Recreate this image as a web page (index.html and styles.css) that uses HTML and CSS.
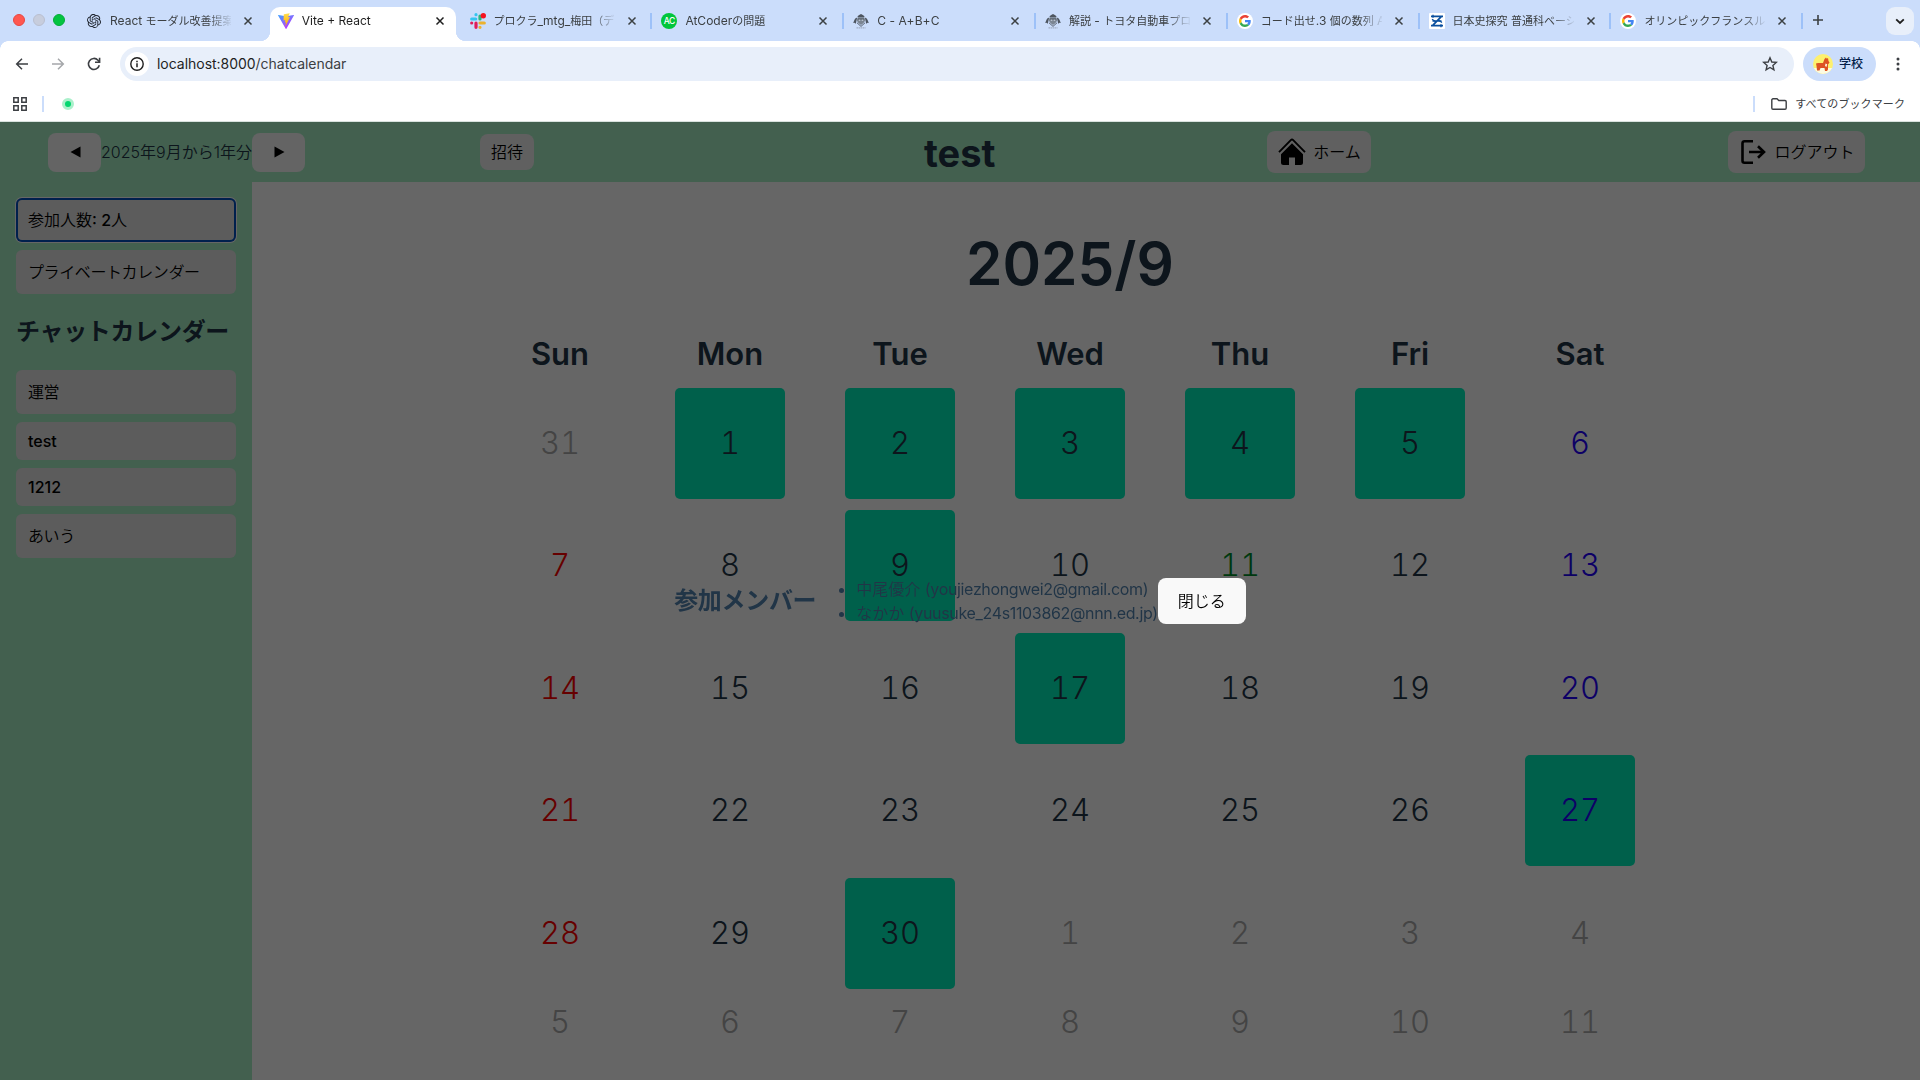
FILE: index.html
```
<!DOCTYPE html>
<html lang="ja">
<head>
<meta charset="utf-8">
<title>Vite + React</title>
<link rel="stylesheet" href="styles.css">
</head>
<body>
<svg class="defs" width="0" height="0" aria-hidden="true">
  <symbol id="close" viewBox="0 0 10 10"><path d="M1.5 1.5l7 7M8.5 1.5l-7 7" stroke="currentColor" stroke-width="1.5" fill="none"/></symbol>
  <symbol id="google" viewBox="0 0 64 64"><circle cx="32" cy="32" r="32" fill="#fff"/><g transform="translate(8 8)"><path fill="#EA4335" d="M24 9.5c3.54 0 6.71 1.22 9.21 3.6l6.85-6.85C35.9 2.38 30.47 0 24 0 14.62 0 6.51 5.38 2.56 13.22l7.98 6.19C12.43 13.72 17.74 9.5 24 9.5z"/><path fill="#4285F4" d="M46.98 24.55c0-1.57-.15-3.09-.38-4.55H24v9.02h12.94c-.58 2.96-2.26 5.48-4.78 7.18l7.73 6c4.51-4.18 7.09-10.36 7.09-17.65z"/><path fill="#FBBC05" d="M10.53 28.59c-.48-1.45-.76-2.99-.76-4.59s.27-3.14.76-4.59l-7.98-6.19C.92 16.46 0 20.12 0 24c0 3.88.92 7.54 2.56 10.78l7.97-6.19z"/><path fill="#34A853" d="M24 48c6.48 0 11.93-2.13 15.89-5.81l-7.73-6c-2.15 1.45-4.92 2.3-8.16 2.3-6.26 0-11.57-4.22-13.47-9.91l-7.98 6.19C6.51 42.62 14.62 48 24 48z"/></g></symbol>
  <symbol id="atcoder" viewBox="0 0 16 16"><path d="M4.500 3.200L6.200 2 8 1l1.800 1 1.700 1.200-.5 1.200H5z" fill="#4d5560"/><path d="M4.800 4.600h6.400l1.300 2.400-1.900 3L8 12 5.400 10 3.500 7z" fill="#7b8592"/><path d="M4.200 4.500C2.600 4.900 1.700 6 1.200 7.400L.2 10l1.200-.3 1.500 1 .6-3.500zM11.800 4.500c1.600.4 2.500 1.500 3 2.900l1 2.600-1.200-.3-1.500 1-.6-3.500z" fill="#4d5560"/><path d="M4 9.800l4 3.600 4-3.600M5 6h6" stroke="#4d5560" stroke-width=".9" fill="none"/><path d="M5.800 7.200h1.500M8.700 7.200h1.500" stroke="#dfe8f6" stroke-width=".9"/><path d="M3.500 14.900h9" stroke="#7f8998" stroke-width=".7" stroke-dasharray="1.500 .5"/></symbol>
</svg>

<div class="browser">
  <div class="tabstrip">
    <div class="lights"><i class="red"></i><i class="grey"></i><i class="green"></i></div>
    <div class="tab nosep">
      <svg class="fav gpt" viewBox="0 0 24 24"><path fill="#1c212b" d="M22.2819 9.8211a5.9847 5.9847 0 0 0-.5157-4.9108 6.0462 6.0462 0 0 0-6.5098-2.9A6.0651 6.0651 0 0 0 4.9807 4.1818a5.9847 5.9847 0 0 0-3.9977 2.9 6.0462 6.0462 0 0 0 .7427 7.0966 5.98 5.98 0 0 0 .511 4.9107 6.051 6.051 0 0 0 6.5146 2.9001A5.9847 5.9847 0 0 0 13.2599 24a6.0557 6.0557 0 0 0 5.7718-4.2058 5.9894 5.9894 0 0 0 3.9977-2.9001 6.0557 6.0557 0 0 0-.7475-7.0729zm-9.022 12.6081a4.4755 4.4755 0 0 1-2.8764-1.0408l.1419-.0804 4.7783-2.7582a.7948.7948 0 0 0 .3927-.6813v-6.7369l2.02 1.1686a.071.071 0 0 1 .038.052v5.5826a4.504 4.504 0 0 1-4.4945 4.4944zm-9.6607-4.1254a4.4708 4.4708 0 0 1-.5346-3.0137l.142.0852 4.783 2.7582a.7712.7712 0 0 0 .7806 0l5.8428-3.3685v2.3324a.0804.0804 0 0 1-.0332.0615L9.74 19.9502a4.4992 4.4992 0 0 1-6.1408-1.6464zM2.3408 7.8956a4.485 4.485 0 0 1 2.3655-1.9728V11.6a.7664.7664 0 0 0 .3879.6765l5.8144 3.3543-2.0201 1.1685a.0757.0757 0 0 1-.071 0l-4.8303-2.7865A4.504 4.504 0 0 1 2.3408 7.872zm16.5963 3.8558L13.1038 8.364 15.1192 7.2a.0757.0757 0 0 1 .071 0l4.8303 2.7913a4.4944 4.4944 0 0 1-.6765 8.1042v-5.6772a.79.79 0 0 0-.407-.667zm2.0107-3.0231l-.142-.0852-4.7735-2.7818a.7759.7759 0 0 0-.7854 0L9.409 9.2297V6.8974a.0662.0662 0 0 1 .0284-.0615l4.8303-2.7866a4.4992 4.4992 0 0 1 6.6802 4.66zM8.3065 12.863l-2.02-1.1638a.0804.0804 0 0 1-.038-.0567V6.0742a4.4992 4.4992 0 0 1 7.3757-3.4537l-.142.0805L8.704 5.459a.7948.7948 0 0 0-.3927.6813zm1.0976-2.3654l2.602-1.4998 2.6069 1.4998v2.9994l-2.5974 1.4997-2.6067-1.4997Z"/></svg>
      <span class="label"><span class="la">React </span>モーダル改善提案</span><svg class="x"><use href="#close"/></svg>
    </div>
    <div class="tab active nosep">
      <svg class="fav" viewBox="0 0 16 16"><defs><linearGradient id="v1" x1="0" y1="0" x2=".6" y2="1"><stop offset="0" stop-color="#41a5ff"/><stop offset="1" stop-color="#bd34fe"/></linearGradient><linearGradient id="v2" x1="0" y1="0" x2="0" y2="1"><stop offset="0" stop-color="#ffdf50"/><stop offset="1" stop-color="#ffa800"/></linearGradient></defs><path fill="url(#v1)" d="M15.900 2.500L8.400 15.700a.4.4 0 0 1-.7 0L.1 2.500c-.2-.3.100-.7.400-.6L8 3.200l7.500-1.300c.4-.1.600.300.4.6z"/><path fill="url(#v2)" d="M11.500.2L6 1.300a.2.2 0 0 0-.2.200L5.500 7.200c0 .1.100.2.200.2l1.600-.4-.5 2.400c0 .1.100.3.300.2l.9-.3-.7 3.600c0 .2.200.3.300.1l4.300-8.800c.1-.1 0-.3-.2-.3l-1.600.3 1.500-3.800c0-.1 0-.2-.1-.2z"/></svg>
      <span class="label"><span class="la">Vite + React</span></span><svg class="x"><use href="#close"/></svg>
    </div>
    <div class="tab">
      <svg class="fav" viewBox="0 0 16 16"><g stroke-width="3.200" stroke-linecap="round"><path d="M6 1.700v0M1.700 6h4" stroke="#36c5f0"/><path d="M10 6V3" stroke="#2eb67d"/><path d="M10 10h4.300M10 14.300v0" stroke="#ecb22e"/><path d="M6 10v4.300M1.700 10v0" stroke="#e01e5a"/></g><circle cx="13.300" cy="2.700" r="2.700" fill="#f5121e"/></svg>
      <span class="label">プロクラ<span class="la">_mtg_</span>梅田（デ</span><svg class="x"><use href="#close"/></svg>
    </div>
    <div class="tab"><span class="fav ac">AC</span><span class="label"><span class="la">AtCoder</span>の問題</span><svg class="x"><use href="#close"/></svg></div>
    <div class="tab"><svg class="fav"><use href="#atcoder"/></svg><span class="label"><span class="la wide">C - A+B+C</span></span><svg class="x"><use href="#close"/></svg></div>
    <div class="tab"><svg class="fav"><use href="#atcoder"/></svg><span class="label">解説<span class="la"> - </span>トヨタ自動車プロ</span><svg class="x"><use href="#close"/></svg></div>
    <div class="tab"><svg class="fav"><use href="#google"/></svg><span class="label">コード出せ<span class="la">.3 </span>個の数列<span class="la"> A</span></span><svg class="x"><use href="#close"/></svg></div>
    <div class="tab">
      <svg class="fav" viewBox="0 0 16 16"><rect width="16" height="16" rx="1" fill="#fff"/><path d="M2 3.300h12M2 12.700h12M3.500 8h9M12.500 3.300L3.500 12.700" stroke="#0a4f9e" stroke-width="1.700" fill="none"/><path d="M4 1.700v3M3 6.300l3 2M10 7.500l3 2M12 11.200v3" stroke="#0a4f9e" stroke-width="1.300"/></svg>
      <span class="label">日本史探究<span class="la"> </span>普通科ベーシ</span><svg class="x"><use href="#close"/></svg>
    </div>
    <div class="tab"><svg class="fav"><use href="#google"/></svg><span class="label">オリンピックフランスル</span><svg class="x"><use href="#close"/></svg></div>
    <svg class="plus" viewBox="0 0 12 12"><path d="M6 1v10M1 6h10" stroke="#3c4043" stroke-width="1.600"/></svg>
    <div class="tabmenu"><svg width="10" height="7" viewBox="0 0 10 7"><path d="M1.200 1.300L5 5l3.800-3.700" stroke="#1f1f1f" stroke-width="1.800" fill="none"/></svg></div>
  </div>

  <div class="toolbar">
    <svg class="nav" viewBox="0 0 16 16"><path d="M14 8H3M8 2.700L2.700 8 8 13.300" stroke="#3c3f43" stroke-width="1.500" fill="none"/></svg>
    <svg class="nav" viewBox="0 0 16 16"><path d="M2 8h11M8 2.700L13.300 8 8 13.300" stroke="#a5a7aa" stroke-width="1.500" fill="none"/></svg>
    <svg class="nav" viewBox="0 0 16 16"><path d="M13.300 9.200A5.500 5.500 0 1 1 12 4.200l1.300 1.500" stroke="#3c3f43" stroke-width="1.600" fill="none"/><path d="M13.600 1.800v4.500H9" stroke="#3c3f43" stroke-width="1.600" fill="none"/></svg>
    <div class="omnibox">
      <span class="info"><svg width="14" height="14" viewBox="0 0 14 14"><circle cx="7" cy="7" r="6.200" stroke="#1f1f1f" stroke-width="1.400" fill="none"/><path d="M7 6.300V10.300M7 3.700v1.500" stroke="#1f1f1f" stroke-width="1.500"/></svg></span>
      <span class="url">localhost:8000<span class="path">/chatcalendar</span></span>
      <svg class="star" width="16" height="16" viewBox="0 0 16 16"><path d="M8 1.800l1.800 4.200 4.500.4-3.400 3 1 4.500L8 11.500l-3.900 2.400 1-4.500-3.400-3 4.500-.4z" stroke="#3c3f43" stroke-width="1.400" fill="none"/></svg>
    </div>
    <div class="profile">
      <svg width="20" height="20" viewBox="0 0 20 20"><clipPath id="face"><circle cx="10" cy="10" r="10"/></clipPath><g clip-path="url(#face)"><rect width="20" height="20" fill="#fdf06f"/><path d="M0 14h20v6H0z" fill="#fdfbe0"/><path d="M3 9.500l2-.5h5l1.500-4 1.500-1.500.8 1.300 1.200-.8.500 3 1 1.500-1.500 2v5L14 17h-2l-.5-3H7.500l-1 2.500H4L3.500 12z" fill="#dd5324"/><path d="M12.500 9.500l1.700.8-.7 2.700-1.500-1z" fill="#fff2dd"/></g></svg>
      <span>学校</span>
    </div>
    <svg class="kebab" width="4" height="14" viewBox="0 0 4 14"><g fill="#3c3f43"><circle cx="2" cy="2" r="1.500"/><circle cx="2" cy="7" r="1.500"/><circle cx="2" cy="12" r="1.500"/></g></svg>
  </div>

  <div class="bookmarks">
    <svg width="14" height="14" viewBox="0 0 14 14"><path d="M.8.800h4.400v4.400H.8zM8.800.800h4.400v4.400H8.800zM.8 8.800h4.400v4.400H.8zM8.800 8.800h4.400v4.400H8.800z" stroke="#3c3f43" stroke-width="1.500" fill="none"/></svg>
    <i class="bar"></i><i class="dot"></i>
    <i class="bar right"></i>
    <svg width="16" height="12" viewBox="0 0 16 12"><path d="M.8 10V2c0-.7.500-1.200 1.200-1.200h4l1.800 1.700H14c.7 0 1.200.5 1.200 1.200V10c0 .7-.5 1.200-1.200 1.200H2C1.300 11.200.8 10.700.8 10z" stroke="#3c3f43" stroke-width="1.400" fill="none"/></svg>
    <span class="all">すべてのブックマーク</span>
  </div>
</div>

<div class="page">
  <header class="header">
    <div class="period"><button class="btn arrow"><svg width="11" height="12" viewBox="0 0 11 12"><path d="M10.500.5v11L.5 6z"/></svg></button><span class="range">2025年9月から1年分</span><button class="btn arrow"><svg width="11" height="12" viewBox="0 0 11 12"><path d="M.5.500v11L10.500 6z"/></svg></button></div>
    <div><button class="btn invite">招待</button></div>
    <h1 class="title">test</h1>
    <div><button class="btn big"><svg width="28" height="28" viewBox="0 0 28 28"><path d="M1 14.200L12.800 2.200q1.200-1.200 2.400 0L27 14.200" stroke="#000" stroke-width="1.900" fill="none"/><path d="M14 5.300L25 16.300V24.500a2.500 2.500 0 0 1-2.500 2.500H17v-7.500h-6V27H5.500A2.500 2.500 0 0 1 3 24.500v-8.200z"/></svg><span>ホーム</span></button></div>
    <div><button class="btn big logout"><svg width="26" height="26" viewBox="0 0 26 26"><path d="M13 2.200H4.500A2 2 0 0 0 2.500 4.200V21.800a2 2 0 0 0 2 2H13M9 13h15M18 7.200L24 13l-6 5.800" stroke="#000" stroke-width="2.600" fill="none"/></svg><span>ログアウト</span></button></div>
  </header>
  <div class="body">
    <aside class="sidebar">
      <button class="item focused">参加人数<b>: 2</b>人</button>
      <button class="item">プライベートカレンダー</button>
      <h2 class="side-title">チャットカレンダー</h2>
      <button class="item">運営</button>
      <button class="item latin">test</button>
      <button class="item latin">1212</button>
      <button class="item">あいう</button>
    </aside>
    <main class="main">
      <h2 class="month">2025/9</h2>
      <div class="grid names"><span>Sun</span><span>Mon</span><span>Tue</span><span>Wed</span><span>Thu</span><span>Fri</span><span>Sat</span></div>
      <div class="grid days">
        <span class="out">31</span><span class="on">1</span><span class="on">2</span><span class="on">3</span><span class="on">4</span><span class="on">5</span><span class="sat">6</span>
        <span class="sun">7</span><span>8</span><span class="on">9</span><span>10</span><span class="today">11</span><span>12</span><span class="sat">13</span>
        <span class="sun">14</span><span>15</span><span>16</span><span class="on">17</span><span>18</span><span>19</span><span class="sat">20</span>
        <span class="sun">21</span><span>22</span><span>23</span><span>24</span><span>25</span><span>26</span><span class="sat on">27</span>
        <span class="sun">28</span><span>29</span><span class="on">30</span><span class="out">1</span><span class="out">2</span><span class="out">3</span><span class="out">4</span>
        <span class="out">5</span><span class="out">6</span><span class="out">7</span><span class="out">8</span><span class="out">9</span><span class="out">10</span><span class="out">11</span>
      </div>
    </main>
  </div>
</div>

<div class="overlay">
  <h2 class="modal-title">参加メンバー</h2>
  <ul class="members"><li>中尾優介 <span class="mail">(youjiezhongwei2@gmail.com)</span></li><li>なかか <span class="mail">(yuusuke_24s1103862@nnn.ed.jp)</span></li></ul>
  <button class="dismiss">閉じる</button>
</div>
</body>
</html>
```
FILE: styles.css
```
* { box-sizing: border-box; }
html, body { margin: 0; height: 100%; overflow: hidden; }
body {
  display: flex; flex-direction: column; background: #fff; color: #213547;
  font: 400 16px/24px Inter, "Noto Sans CJK JP", sans-serif;
}
.defs { position: absolute; }
h1, h2, ul { margin: 0; }
button { font: inherit; font-weight: 350; color: #000; border: 0; padding: 0; border-radius: 8px; }
svg { flex: none; display: block; }

/* browser chrome */
.browser { height: 122px; flex: none; background: #fff; border-bottom: 1px solid #d9e2de; font-size: 13px; }
.tabstrip { height: 41px; background: #cbddfb; display: flex; align-items: flex-start; }
.lights { width: 78px; display: flex; gap: 8px; padding: 14px 0 0 13px; flex: none; }
.lights i { width: 12px; height: 12px; border-radius: 50%; border: 1px solid #b9bfd0; background: #c7cddd; }
.lights .red { background: #ff5750; border-color: #e84641; }
.lights .green { background: #03c440; border-color: #03ad38; }
.tab { position: relative; width: 191.8px; height: 34px; margin-top: 7px; padding-left: 8px; display: flex; align-items: center; flex: none; color: #3c4043; font-size: 11px; padding-bottom: 6px; }
.tab::after { content: ""; position: absolute; right: 1px; top: 6px; width: 2px; height: 16px; background: #9dc1f8; }
.nosep::after { display: none; }
.active { color: #1f1f1f; }
.active::before { content: ""; position: absolute; z-index: 0; left: 0; top: 0; width: 186px; height: 34px; background: #fff; border-radius: 10px 10px 0 0; }
.active::after { content: ""; display: block; left: -10px; right: auto; top: 24px; width: 206px; height: 10px; background: radial-gradient(circle at 0 0, transparent 10px, #fff 10.5px) left / 10px 10px no-repeat, radial-gradient(circle at 100% 0, transparent 10px, #fff 10.5px) right / 10px 10px no-repeat; }
.active > * { position: relative; }
.fav { width: 16px; height: 16px; flex: none; }
.gpt { padding: 1px; }
.ac { border-radius: 50%; background: #00c63b; color: #fff; font-size: 8.500px; font-weight: 500; line-height: 16px; text-align: center; letter-spacing: -.3px; }
.label { width: 121px; margin-left: 8px; overflow: hidden; white-space: nowrap; line-height: 20px; -webkit-mask: linear-gradient(90deg, #000 98px, transparent 123px); mask: linear-gradient(90deg, #000 98px, transparent 123px); }
.la { font-size: 12px; white-space: pre; }
.wide { letter-spacing: .1px; }
.x { width: 10px; height: 10px; margin-left: 12px; }
.plus { width: 12px; height: 12px; margin: 14px 0 0 8px; }
.tabmenu { width: 28px; height: 28px; border-radius: 9px; background: #e8effa; margin: 7px 6px 0 auto; display: flex; align-items: center; justify-content: center; }
.toolbar { height: 46px; display: flex; align-items: center; padding-left: 14px; background: radial-gradient(circle at 100% 100%, #fff 7.500px, #cbddfb 8px) 0 0 / 8px 8px no-repeat, radial-gradient(circle at 0 100%, #fff 7.500px, #cbddfb 8px) 100% 0 / 8px 8px no-repeat, #fff; }
.nav { width: 16px; height: 16px; margin-right: 20px; }
.omnibox { width: 1674px; height: 34px; margin-left: -2px; border-radius: 17px; background: #e8effa; display: flex; align-items: center; padding: 0 16px 0 5px; flex: none; }
.info { width: 24px; height: 24px; border-radius: 50%; background: #fff; display: flex; align-items: center; justify-content: center; }
.url { margin-left: 8px; font-size: 14px; letter-spacing: -.03px; color: #1f1f1f; flex: 1; }
.path { color: #3c4043; }
.profile { margin-left: 9px; width: 73px; height: 34px; border-radius: 17px; background: #cbddfb; color: #041e49; font-weight: 500; font-size: 12px; display: flex; align-items: center; gap: 6px; padding-left: 10px; }
.kebab { margin-left: 20px; }
.bookmarks { height: 34px; display: flex; align-items: center; padding: 0 15px 0 13px; }
.bar { width: 2px; height: 16px; background: #cbddfb; margin-left: 15px; }
.right { margin: 0 16px 0 auto; }
.dot { width: 12px; height: 12px; border-radius: 50%; background: #03d66f; border: 3px solid #aaf0cb; margin-left: 18px; }
.all { margin-left: 8px; font-size: 11px; letter-spacing: .1px; color: #3c4043; }

/* application */
.page { flex: 1; display: flex; flex-direction: column; min-height: 0; }
.header { height: 60px; flex: none; background: #a8f0c6; display: grid; grid-template-columns: 432px 444px 343px 461px auto; align-items: center; padding-left: 48px; }
.period { display: flex; align-items: center; }
.range { width: 151px; text-align: center; white-space: nowrap; font-weight: 350; }
.btn { display: flex; align-items: center; justify-content: center; background: #f0f0f0; }
.arrow { width: 53px; height: 39px; background: #f9f9f9; padding-left: 1px; }
.invite { width: 54px; height: 36px; background: #f0f0f0; }
.title { font-size: 38px; font-weight: 700; line-height: 44px; padding-top: 1px; }
.big { width: 104px; height: 42px; gap: 7px; padding-left: 1px; }
.logout { width: 137px; gap: 8px; padding-left: 2px; }
.body { flex: 1; display: flex; min-height: 0; }
.sidebar { width: 252px; padding: 16px; background: #a8f0c6; display: flex; flex-direction: column; gap: 8px; flex: none; }
.item { height: 44px; flex: none; border-radius: 6px; background: #e6e6e6; text-align: left; padding: 0 12px; letter-spacing: -.4px; }
.item b { font-weight: 500; }
.latin { height: 38px; font-weight: 500; letter-spacing: 0; }
.focused { box-shadow: inset 0 0 0 2px #0050c0, 0 0 0 1px #fff; letter-spacing: 0; }
.side-title { height: 60px; font-size: 24px; line-height: 60px; font-weight: 700; white-space: nowrap; letter-spacing: -.3px; }
.main { flex: 1; }
.month { height: 144px; margin: 10px 0 0 -32px; text-align: center; font-size: 58.500px; line-height: 144px; font-weight: 600; }
.grid { display: grid; grid-template-columns: repeat(7, 110px); column-gap: 60px; margin-left: 253px; text-align: center; }
.names { font-size: 31px; font-weight: 600; line-height: 36px; }
.days { grid-template-rows: repeat(5, 111px) 44px; row-gap: 11.600px; margin-top: 15.600px; font-size: 31px; font-weight: 330; font-feature-settings: "tnum"; }
.days span { display: flex; align-items: center; justify-content: center; border-radius: 5px; padding-bottom: 1px; }
.on { background: #00f0bb; }
.sun { color: #f00; }
.sat { color: #2200ff; }
.today { color: #008f2a; }
.out { color: #aaa; }

/* modal */
.overlay { position: fixed; inset: 122px 0 0; background: rgba(0, 0, 0, .6); display: flex; align-items: center; justify-content: center; }
.modal-title { font-size: 24px; font-weight: 700; letter-spacing: -.3px; }
.members { padding-left: 40px; font-weight: 350; }
.mail { letter-spacing: -.34px; font-weight: 400; }
.dismiss { width: 88px; height: 46px; background: #f9f9f9; }
```
